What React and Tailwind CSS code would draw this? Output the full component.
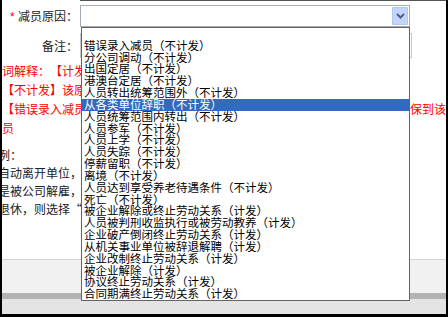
import React from 'react'

const reasons = [
  '',
  '错误录入减员（不计发）',
  '分公司调动（不计发）',
  '出国定居（不计发）',
  '港澳台定居（不计发）',
  '人员转出统筹范围外（不计发）',
  '从各类单位辞职（不计发）',
  '人员统筹范围内转出（不计发）',
  '人员参军（不计发）',
  '人员上学（不计发）',
  '人员失踪（不计发）',
  '停薪留职（不计发）',
  '离境（不计发）',
  '人员达到享受养老待遇条件（不计发）',
  '死亡（不计发）',
  '被企业解除或终止劳动关系（计发）',
  '人员被判刑收监执行或被劳动教养（计发）',
  '企业破产倒闭终止劳动关系（计发）',
  '从机关事业单位被辞退解聘（计发）',
  '企业改制终止劳动关系（计发）',
  '被企业解除（计发）',
  '协议终止劳动关系（计发）',
  '合同期满终止劳动关系（计发）',
]

const selected = 6

const OPEN = '（【“'
const CLOSE = '）】：，”'

// full-width punctuation kept one em wide, like the old bitmap font
function Fw({ text }) {
  return [...text].map((c, i) => {
    if (OPEN.includes(c)) {
      return <span key={i} className="inline-block w-[1em] text-right">{c}</span>
    }
    if (CLOSE.includes(c)) {
      return <span key={i} className="inline-block w-[1em] text-left">{c}</span>
    }
    return c
  })
}

function Chevron() {
  return (
    <svg width="9" height="6" viewBox="0 0 9 6">
      <path d="M1 1l3.5 3.5L8 1" fill="none" stroke="#4d6185" strokeWidth="2" />
    </svg>
  )
}

export default function App() {
  return (
    <div className="relative w-[448px] h-[317px] overflow-hidden bg-white border-l-2 border-r-2 border-b-[3px] border-black flex flex-col font-['Noto_Sans_CJK_SC',sans-serif] text-[12px]">
      <div className="h-[259px] shrink-0 overflow-hidden">
        <div className="ml-[78px] h-px bg-[#555]" />

        {/* 减员原因 */}
        <div className="mt-[4px] flex items-center">
          <div className="w-[76px] shrink-0 text-right text-[#222] whitespace-nowrap">
            <span className="text-[#ff0000] font-['Liberation_Sans',sans-serif]">* </span><Fw text="减员原因：" />
          </div>
          <div className="ml-[2px] w-[330px] h-[22px] shrink-0 border border-[#a5acb2] bg-white flex items-center justify-end pr-px">
            <div className="w-[16px] h-[18px] bg-[#c3d5fd] border border-[#b3c5f0] rounded-[1px] flex items-center justify-center">
              <Chevron />
            </div>
          </div>
        </div>

        {/* 备注 */}
        <div className="mt-[6px] flex items-center">
          <div className="w-[76px] shrink-0 text-right text-[#222]"><Fw text="备注：" /></div>
          <div className="ml-[2px] w-[332px] h-[25px] shrink-0 border border-[#c8c8c8] bg-white" />
        </div>

        <div className="mt-[3px] leading-[19px] text-[#ff0000] whitespace-nowrap">
          <div><Fw text="词解释：【计发】该原因会计发失业保险金" /></div>
          <div><Fw text="【不计发】该原因不会计发失业保险金" /></div>
          <div className="flex">
            <span className="w-[408px] shrink-0"><Fw text="【错误录入减员】" /></span>
            <span>保到该人员</span>
          </div>
          <div>员</div>
        </div>

        <div className="mt-[9px] -ml-[4px] leading-[18px] text-[#222] whitespace-nowrap">
          <div><Fw text="例：" /></div>
          <div><Fw text="自动离开单位，则选择“从各类单位辞职”" /></div>
          <div><Fw text="是被公司解雇，则选择“被企业解除”" /></div>
          <div><Fw text="退休，则选择“人员达到享受养老待遇条件”" /></div>
        </div>
      </div>

      <div className="h-px bg-[#d4d4d4]" />
      <div className="h-[33px] bg-[#f1f1f1]" />
      <div className="h-[6px] bg-[#b3b3b3]" />
      <div className="h-[15px] bg-[#e4e4e4]" />

      {/* open dropdown list */}
      <div className="absolute left-[79px] top-[27px] w-[329px] h-[274px] z-10 border border-[#646464] bg-white flex flex-col">
        {reasons.map((r, i) => (
          <div
            key={i}
            className={
              i === selected
                ? 'h-[11.83px] leading-[11.83px] pl-[2px] text-[11.5px] whitespace-nowrap bg-[#316ac5] text-white'
                : 'h-[11.83px] leading-[11.83px] pl-[2px] text-[11.5px] whitespace-nowrap text-black'
            }
          >
            <Fw text={r} />
          </div>
        ))}
      </div>
    </div>
  )
}
